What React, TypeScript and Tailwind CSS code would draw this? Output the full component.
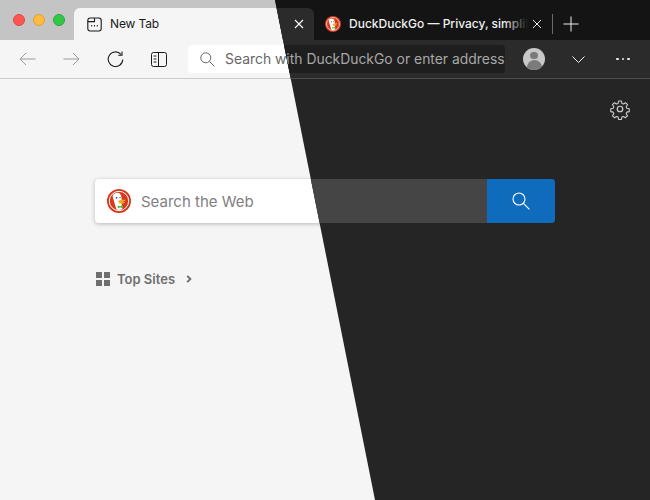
import { useId } from "react"

function DuckLogo({ size }: { size: number }) {
  const id = useId()
  return (
    <svg width={size} height={size} viewBox="0 0 24 24" className="shrink-0">
      <circle cx="12" cy="12" r="12" fill="#d8391c" />
      <circle cx="12" cy="12" r="9.7" fill="none" stroke="#fff" strokeWidth="1" />
      <clipPath id={id}>
        <circle cx="12" cy="12" r="9" />
      </clipPath>
      <g clipPath={`url(#${id})`}>
        <path d="M6.2 5.4C8.2 3.2 12 3.2 13.4 5.2C14.6 7 14.6 9 14.6 10.6L14.8 16.5L15.6 22H9.6C9 18 7.4 14 6.6 11C6 9 5.2 7 6.2 5.4Z" fill="#fff" />
        <circle cx="9.6" cy="8.8" r="0.9" fill="#2d4f8e" />
        <circle cx="13" cy="8.6" r="0.7" fill="#2d4f8e" />
        <path d="M11.8 11.6C13.5 11 16 10.6 18.4 10.8C18.6 11.8 17 12.4 15.6 12.6C16.6 12.8 17.6 13 18.2 13.2C17.4 14.4 14 14.8 12.4 14.2C11.6 13.8 11.2 12.2 11.8 11.6Z" fill="#f5a81c" />
        <path d="M10.6 16.4L13 17.2L15.8 16L16 19L13 18.4L10.8 19.2Z" fill="#4cba3c" />
      </g>
    </svg>
  )
}

function Chrome({ dark }: { dark: boolean }) {
  const icon = dark ? "#f2f2f2" : "#1a1a1a"
  const muted = dark ? "#8a8a8a" : "#9a9a9a"

  return (
    <div className={`w-[650px] h-[500px] flex flex-col overflow-hidden font-['Inter',sans-serif] ${dark ? "bg-[#252525]" : "bg-[#f5f5f5]"}`}>

      {/* TAB STRIP */}
      <div className={`h-[40px] flex items-end shrink-0 ${dark ? "bg-[#141414]" : "bg-[#c4c4c4]"}`}>
        <div className="w-[74px] h-[40px] flex items-center gap-[8px] pl-[13px]">
          <span className="w-[12px] h-[12px] rounded-full bg-[#fc5753] border border-[#df4744]" />
          <span className="w-[12px] h-[12px] rounded-full bg-[#fdbc40] border border-[#de9f34]" />
          <span className="w-[12px] h-[12px] rounded-full bg-[#33c748] border border-[#27aa35]" />
        </div>

        {/* active tab */}
        <div className={`w-[240px] shrink-0 h-[32px] rounded-t-[6px] flex items-center pl-[13px] pr-[10px] ${dark ? "bg-[#2b2b2b] text-white" : "bg-[#f5f5f5] text-[#1a1a1a]"}`}>
          <svg width="15" height="15" viewBox="0 0 15 15" fill="none" stroke={icon} strokeWidth="1.1" className="shrink-0">
            <rect x="0.8" y="1" width="13.4" height="13" rx="2.4" />
            <path d="M0.8 4.6H7.5V1" />
            <path d="M4.2 8.8h1M7 8.8h1M9.8 8.8h1" strokeWidth="1.6" />
          </svg>
          <span className="ml-[8px] text-[12px] tracking-[-0.15px] leading-none">New Tab</span>
          <svg width="10" height="10" viewBox="0 0 10 10" stroke={dark ? "#fff" : "#1a1a1a"} strokeWidth="1.1" className="ml-auto">
            <path d="M1 1l8 8M9 1l-8 8" />
          </svg>
        </div>

        {/* second tab */}
        <div className="h-[32px] w-[250px] shrink-0 flex items-center pl-[11px] text-[#f0f0f0]">
          <DuckLogo size={16} />
          <span className="relative shrink-0 ml-[8px] w-[179px] overflow-hidden whitespace-nowrap text-[12px] font-medium leading-none">
            DuckDuckGo — Privacy, simplified.
            <span className="absolute right-0 top-0 bottom-0 w-[24px] bg-gradient-to-r from-transparent to-[#141414]" />
          </span>
          <svg width="10" height="10" viewBox="0 0 10 10" stroke="#e8e8e8" strokeWidth="1" className="ml-[4px] shrink-0">
            <path d="M1 1l8 8M9 1l-8 8" />
          </svg>
          <span className="w-px h-[20px] bg-[#6a6a6a] ml-[10px] shrink-0" />
          <svg width="16" height="16" viewBox="0 0 16 16" stroke="#f0f0f0" strokeWidth="1" className="ml-[10px] shrink-0">
            <path d="M8 0.5v15M0.5 8h15" />
          </svg>
        </div>
      </div>

      {/* TOOLBAR */}
      <div className={`h-[39px] flex items-center shrink-0 border-b ${dark ? "bg-[#2b2b2b] border-[#4e4e4e]" : "bg-[#f5f5f5] border-[#cbcbcb]"}`}>
        <svg width="17" height="14" viewBox="0 0 17 14" fill="none" stroke={muted} strokeWidth="1" className="ml-[19px]">
          <path d="M16.5 7H1M7 1L1 7l6 6" />
        </svg>
        <svg width="17" height="14" viewBox="0 0 17 14" fill="none" stroke={muted} strokeWidth="1" className="ml-[27px]">
          <path d="M0.5 7H16M10 1l6 6-6 6" />
        </svg>
        <svg width="17" height="17" viewBox="0 0 17 17" fill="none" stroke={icon} strokeWidth="1.1" className="ml-[27px]">
          <path d="M14 3.4A7.3 7.3 0 1 0 15.8 8.5" />
          <path d="M15 0.6V4.2H11.2" />
        </svg>
        <svg width="16" height="15" viewBox="0 0 16 15" fill="none" stroke={icon} strokeWidth="1" className="ml-[27px]">
          <rect x="0.5" y="0.5" width="15" height="14" rx="2" />
          <path d="M7.5 0.5v14M2.6 4h2.8M2.6 7h2.8M2.6 10h2.8" />
        </svg>

        {/* address box */}
        <div className={`ml-[21px] w-[317px] h-[28px] rounded-[4px] flex items-center pl-[12px] ${dark ? "bg-[#1e1e1e] text-[#a8a8a8]" : "bg-white text-[#666666]"}`}>
          <svg width="15" height="15" viewBox="0 0 15 15" fill="none" stroke={dark ? "#a8a8a8" : "#666666"} strokeWidth="1" className="shrink-0">
            <circle cx="5.8" cy="5.8" r="5" />
            <path d="M9.4 9.4L14.4 14.4" />
          </svg>
          <span className="ml-[10px] mt-[1px] text-[13.9px] leading-none whitespace-nowrap">Search with DuckDuckGo or enter address</span>
        </div>

        <div className="ml-[18px] w-[22px] h-[22px] rounded-full bg-[#c8c8c8] overflow-hidden flex flex-col items-center">
          <span className="mt-[4px] w-[8px] h-[8px] rounded-full bg-[#7b7b7b]" />
          <span className="mt-[1px] w-[15px] h-[12px] rounded-t-full bg-[#7b7b7b]" />
        </div>
        <svg width="13" height="7" viewBox="0 0 13 7" fill="none" stroke={icon} strokeWidth="1" className="ml-[27px]">
          <path d="M0.5 0.5l6 6 6-6" />
        </svg>
        <div className="ml-[31px] flex gap-[3px]">
          <span className={`w-[2.5px] h-[2.5px] rounded-full ${dark ? "bg-[#eeeeee]" : "bg-black"}`} />
          <span className={`w-[2.5px] h-[2.5px] rounded-full ${dark ? "bg-[#eeeeee]" : "bg-black"}`} />
          <span className={`w-[2.5px] h-[2.5px] rounded-full ${dark ? "bg-[#eeeeee]" : "bg-black"}`} />
        </div>
      </div>

      {/* PAGE */}
      <div className="flex flex-col flex-1 pl-[95px] pr-[95px]">
        <div className="flex justify-end mt-[19px] mr-[-76px]">
          <svg width="22" height="22" viewBox="0 0 24 24" fill="none" stroke={dark ? "#d0d0d0" : "#555"} strokeWidth="1.3" strokeLinejoin="round">
            <path d="M10.3 2.3h3.4l.6 2.9 1.9.8 2.5-1.6 2.4 2.4-1.6 2.5.8 1.9 2.9.6v3.4l-2.9.6-.8 1.9 1.6 2.5-2.4 2.4-2.5-1.6-1.9.8-.6 2.9h-3.4l-.6-2.9-1.9-.8-2.5 1.6-2.4-2.4 1.6-2.5-.8-1.9-2.9-.6v-3.4l2.9-.6.8-1.9-1.6-2.5 2.4-2.4 2.5 1.6 1.9-.8z" transform="translate(1.2 1.2) scale(0.9)" />
            <circle cx="12" cy="12" r="3" />
          </svg>
        </div>

        {/* search */}
        <div className={`mt-[59px] h-[44px] rounded-[4px] flex overflow-hidden ${dark ? "bg-[#454545]" : "bg-white shadow-[0_1px_4px_rgba(0,0,0,0.25)]"}`}>
          <div className="flex-1 flex items-center pl-[12px]">
            <DuckLogo size={24} />
            <span className={`ml-[10px] text-[15px] leading-none ${dark ? "text-[#bdbdbd]" : "text-[#808080]"}`}>Search the Web</span>
          </div>
          <div className="w-[68px] bg-[#0f6cbd] flex items-center justify-center">
            <svg width="18" height="18" viewBox="0 0 18 18" fill="none" stroke="#fff" strokeWidth="1.1">
              <circle cx="7" cy="7" r="6" />
              <path d="M11.4 11.4L17.4 17.4" />
            </svg>
          </div>
        </div>

        {/* top sites */}
        <div className={`mt-[49px] flex items-center pl-[1px] ${dark ? "text-[#dcdcdc]" : "text-[#6e6e6e]"}`}>
          <div className="grid grid-cols-[6px_6px] gap-[2px] w-[14px]">
            <span className="w-[6px] h-[6px] bg-current" />
            <span className="w-[6px] h-[6px] bg-current" />
            <span className="w-[6px] h-[6px] bg-current" />
            <span className="w-[6px] h-[6px] bg-current" />
          </div>
          <span className="ml-[7px] text-[13px] leading-none font-semibold">Top Sites</span>
          <svg width="6" height="8" viewBox="0 0 6 8" fill="none" stroke="currentColor" strokeWidth="1.9" className="ml-[11px]">
            <path d="M1.2 0.8l3.2 3.2-3.2 3.2" />
          </svg>
        </div>
      </div>
    </div>
  )
}

export default function App() {
  return (
    <div className="relative w-[650px] h-[500px] overflow-hidden">
      <Chrome dark={false} />
      {/* DARK THEME CUT */}
      <div className="absolute inset-0 [clip-path:polygon(275px_0,650px_0,650px_500px,375px_500px)]">
        <Chrome dark={true} />
      </div>
    </div>
  )
}
